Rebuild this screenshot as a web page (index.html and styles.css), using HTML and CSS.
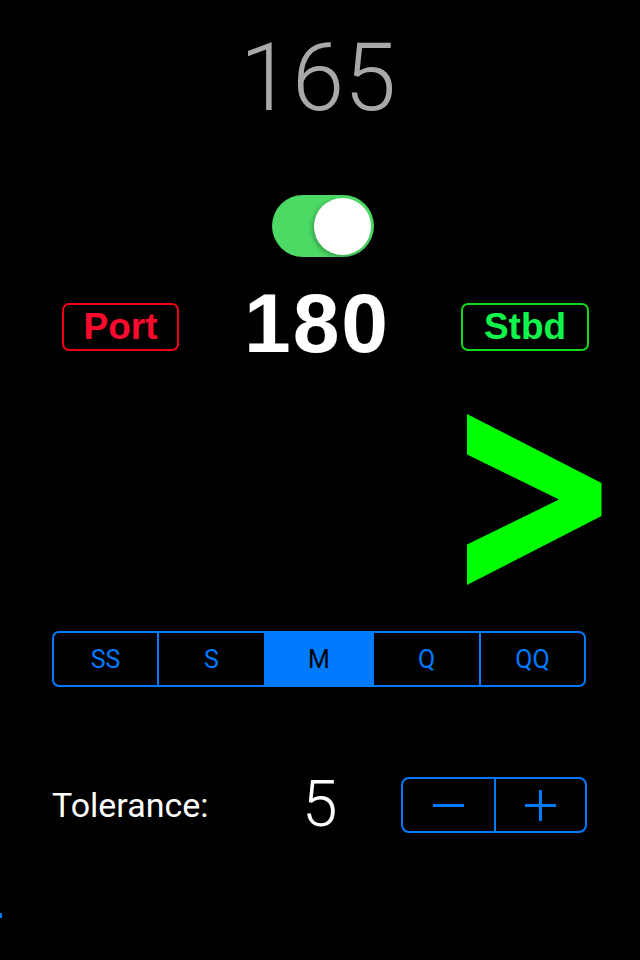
FILE: index.html
```html
<!DOCTYPE html>
<html>
<head>
<meta charset="utf-8">
<link rel="stylesheet" href="styles.css">
</head>
<body>
<main class="screen">
  <div class="heading-reading">165</div>
  <div class="toggle-row">
    <div class="switch"><div class="knob"></div></div>
  </div>
  <div class="course-row">
    <div class="tag tag-port">Port</div>
    <div class="course">180</div>
    <div class="tag tag-stbd">Stbd</div>
  </div>
  <div class="arrow-row">
    <svg class="chevron" width="135" height="171" viewBox="0 0 135 171">
      <polygon points="0,0 0,40.5 92,85.5 0,130.5 0,171 134.5,102 134.5,69" fill="#00ff00"/>
    </svg>
  </div>
  <div class="segmented">
    <div class="seg">SS</div>
    <div class="seg">S</div>
    <div class="seg seg-on">M</div>
    <div class="seg">Q</div>
    <div class="seg">QQ</div>
  </div>
  <div class="tol-row">
    <div class="tol-label">Tolerance:</div>
    <div class="tol-value">5</div>
    <div class="stepper">
      <div class="step"><span class="minus"></span></div>
      <div class="step"><span class="plus"></span></div>
    </div>
  </div>
  <div class="edge-mark"></div>
</main>
</body>
</html>
```
FILE: styles.css
```css
html, body {
  margin: 0;
  padding: 0;
  background: #000;
}
.screen {
  position: relative;
  width: 640px;
  height: 960px;
  overflow: hidden;
  background: #000;
  font-family: Roboto, "Liberation Sans", sans-serif;
  display: flex;
  flex-direction: column;
}
.heading-reading {
  margin-top: 31px;
  height: 94px;
  font-size: 94px;
  line-height: 94px;
  font-weight: 300;
  color: #a9a9a9;
  text-align: center;
  padding-right: 4px;
}
.toggle-row {
  margin-top: 70px;
  display: flex;
  justify-content: center;
  padding-left: 5px;
}
.switch {
  width: 102px;
  height: 62px;
  border-radius: 31px;
  background: #4cd964;
  display: flex;
  justify-content: flex-end;
  align-items: center;
  padding-right: 3px;
  box-sizing: border-box;
}
.knob {
  width: 57px;
  height: 57px;
  border-radius: 50%;
  background: #fff;
  box-shadow: -2px 2px 4px rgba(0,0,0,0.25);
}
.course-row {
  margin-top: 24px;
  height: 84px;
  display: flex;
  justify-content: space-between;
  align-items: flex-start;
  padding: 0 51px 0 62px;
}
.tag {
  margin-top: 22px;
  height: 48px;
  box-sizing: border-box;
  border: 2px solid;
  border-radius: 7px;
  display: flex;
  align-items: center;
  justify-content: center;
  font-family: "Liberation Sans", sans-serif;
  font-weight: 700;
  font-size: 37px;
}
.tag-port {
  width: 117px;
  color: #ff0a2e;
  border-color: #ee0014;
}
.tag-stbd {
  width: 128px;
  color: #10f54c;
  border-color: #14d81a;
}
.course {
  font-family: "Liberation Sans", sans-serif;
  font-weight: 700;
  font-size: 84px;
  line-height: 84px;
  letter-spacing: 2px;
  color: #fff;
  margin-left: -6px;
}
.arrow-row {
  margin-top: 49px;
  display: flex;
  justify-content: flex-end;
  padding-right: 38px;
}
.chevron {
  display: block;
}
.segmented {
  margin: 46px 54px 0 52px;
  height: 56px;
  box-sizing: border-box;
  border: 2px solid #007aff;
  border-radius: 7px;
  display: grid;
  grid-template-columns: 103px 107px 108px 107px 1fr;
  overflow: hidden;
}
.seg {
  display: flex;
  align-items: center;
  justify-content: center;
  color: #007aff;
  font-size: 25px;
  border-left: 2px solid #007aff;
}
.seg:first-child {
  border-left: none;
}
.seg-on {
  background: #007aff;
  color: #000;
}
.tol-row {
  margin-top: 90px;
  height: 56px;
  display: flex;
  align-items: center;
  padding: 0 53px 0 52px;
}
.tol-label {
  width: 250px;
  color: #fff;
  font-size: 34px;
}
.tol-value {
  color: #fff;
  font-size: 64px;
  font-weight: 300;
  line-height: 56px;
}
.stepper {
  margin-left: auto;
  width: 186px;
  height: 56px;
  box-sizing: border-box;
  border: 2px solid #007aff;
  border-radius: 8px;
  display: grid;
  grid-template-columns: 1fr 1fr;
}
.step {
  display: flex;
  align-items: center;
  justify-content: center;
}
.step + .step {
  border-left: 2px solid #007aff;
}
.minus {
  width: 31px;
  height: 3px;
  background: #007aff;
}
.plus {
  position: relative;
  width: 31px;
  height: 31px;
}
.plus::before, .plus::after {
  content: "";
  position: absolute;
  background: #007aff;
}
.plus::before {
  left: 0;
  top: 14px;
  width: 31px;
  height: 3px;
}
.plus::after {
  left: 14px;
  top: 0;
  width: 3px;
  height: 31px;
}
.edge-mark {
  position: absolute;
  left: 0;
  top: 913px;
  width: 2px;
  height: 5px;
  background: #007aff;
}
```
